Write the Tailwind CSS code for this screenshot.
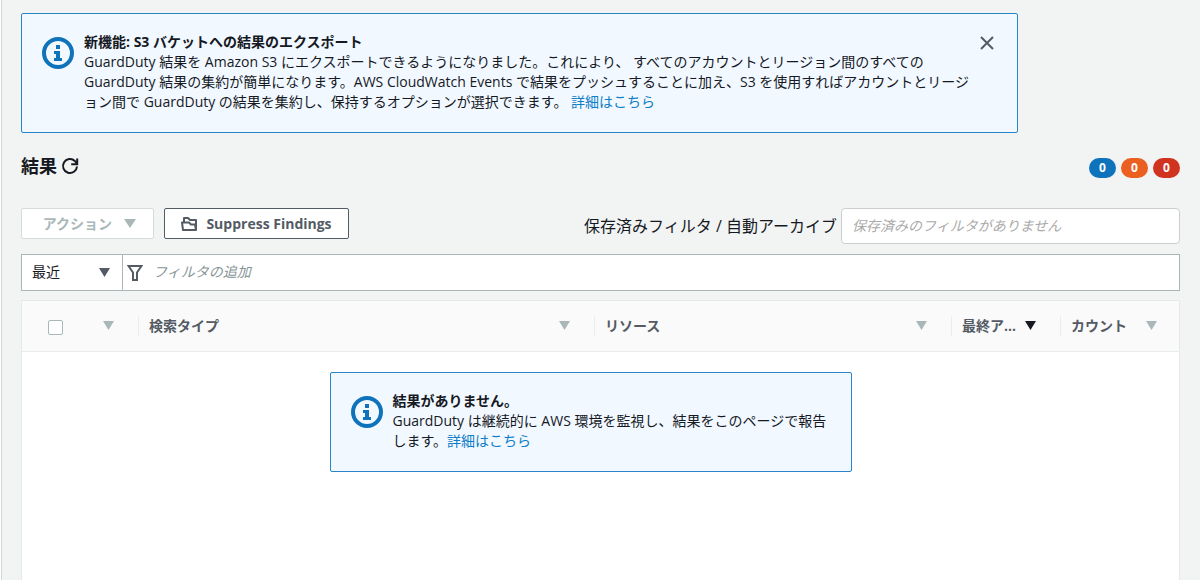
<!DOCTYPE html>
<html lang="ja">
<head>
    <meta charset="UTF-8" />
    <meta name="viewport" content="width=device-width, initial-scale=1.0" />
    <title>結果 | GuardDuty</title>
    <script src="https://cdn.jsdelivr.net/npm/@tailwindcss/browser@4"></script>
    <style>
        body {
            font-family: 'Open Sans', 'Noto Sans CJK JP', sans-serif;
        }
    </style>
</head>
<body class="bg-white pl-px text-sm text-[#16191f]">
    <main class="flex min-h-screen flex-col border-l border-[#d0d6d6] bg-[#f2f3f3] pt-[13px] pr-5 pl-[19px]">
        <!-- Aviso de nueva función -->
        <section class="flex h-[120px] w-[86%] items-start rounded-xs border border-[#2a85c7] bg-[#f1f8ff] pt-[18px] pr-[23px] pl-5 leading-5">
            <svg class="mt-[5px] h-8 w-8 shrink-0" viewBox="0 0 32 32" fill="none">
                <circle cx="16" cy="16" r="14" stroke="#0f73bb" stroke-width="4" />
                <path fill="#0f73bb" d="M14 8h4v4h-4zM12 14h6v7h2v3h-8v-3h2v-4h-2z" />
            </svg>
            <div class="ml-[10px] flex-1">
                <h2 class="font-bold">新機能: S3 バケットへの結果のエクスポート</h2>
                <p>GuardDuty 結果を Amazon S3 にエクスポートできるようになりました。これにより、 すべてのアカウントとリージョン間のすべての<br>GuardDuty 結果の集約が簡単になります。AWS CloudWatch Events で結果をプッシュすることに加え、S3 を使用すればアカウントとリージ<br>ョン間で GuardDuty の結果を集約し、保持するオプションが選択できます。 <a href="#" class="text-[#0f7dc7]">詳細はこちら</a></p>
            </div>
            <button type="button" aria-label="閉じる" class="mt-1 shrink-0">
                <svg class="h-[14px] w-[14px]" viewBox="0 0 14 14" fill="none" stroke="#545b64" stroke-width="2">
                    <path d="M1 1l12 12M13 1L1 13" />
                </svg>
            </button>
        </section>

        <header class="mt-[19px] flex h-7 items-center justify-between">
            <div class="flex items-center gap-1">
                <h1 class="text-lg leading-7 font-bold">結果</h1>
                <button type="button" aria-label="更新">
                    <svg class="h-[18px] w-[18px]" viewBox="0 0 18 18" fill="none" stroke="#16191f" stroke-width="2">
                        <path d="M16 9.500a7 7 0 1 1-2.200-5.600L16 6.500" />
                        <path d="M16.200 1.500v5.700h-6" />
                    </svg>
                </button>
            </div>
            <div class="mt-1 flex gap-[5px] text-xs font-bold text-white">
                <span class="flex h-5 w-[27px] items-center justify-center rounded-full bg-[#0f73bb]">0</span>
                <span class="flex h-5 w-[27px] items-center justify-center rounded-full bg-[#eb5f20]">0</span>
                <span class="flex h-5 w-[27px] items-center justify-center rounded-full bg-[#d13321]">0</span>
            </div>
        </header>

        <div class="mt-7 flex items-start justify-between">
            <div class="flex gap-[10px]">
                <button type="button" disabled class="flex h-[31px] w-[133px] items-center justify-end gap-3 rounded-xs border border-[#d5dbdb] bg-white pr-[17px] font-bold text-[#aab7b8]">
                    アクション
                    <svg class="h-[9px] w-3" viewBox="0 0 12 9" fill="currentColor"><path d="M0 0h12L6 9z" /></svg>
                </button>
                <button type="button" class="flex h-[31px] w-[185px] items-center justify-center gap-2 rounded-xs border border-[#545b64] bg-white font-bold text-[#545b64]">
                    <svg class="h-4 w-[17px] shrink-0" viewBox="0 0 17 16" fill="none" stroke="currentColor" stroke-width="2" stroke-linejoin="round">
                        <path d="M3 6V2h4l2 2h6v10" />
                        <path d="M1 6.500h7l2 2h4l1 5.500H2z" />
                    </svg>
                    Suppress Findings
                </button>
            </div>
            <div class="flex items-center gap-1">
                <label for="savedFilter" class="text-base">保存済みフィルタ / 自動アーカイブ</label>
                <input type="text" id="savedFilter" placeholder="保存済みのフィルタがありません" class="h-9 w-[339px] rounded-sm border border-[#cccfcf] bg-white px-[10px] pb-[2px] placeholder:text-[#aaaaaa] placeholder:italic" />
            </div>
        </div>

        <!-- Barra de filtros -->
        <div class="mt-[10px] flex h-[37px] border border-[#aab7b8] bg-white">
            <div class="relative w-[101px] shrink-0 border-r border-[#aab7b8]">
                <select aria-label="期間" class="h-full w-full appearance-none pb-[2px] pl-[10px]">
                    <option>最近</option>
                </select>
                <svg class="pointer-events-none absolute top-[13px] right-3 h-[9px] w-[11px]" viewBox="0 0 11 9" fill="#545b64"><path d="M0 0h11L5.500 9z" /></svg>
            </div>
            <label for="filterInput" aria-label="フィルタ" class="flex shrink-0 items-center pl-1">
                <svg class="h-4 w-4" viewBox="0 0 16 16" fill="none" stroke="#545b64" stroke-width="2">
                    <path d="M1.500 1h13L10 7.500V15H6V7.500z" />
                </svg>
            </label>
            <input type="text" id="filterInput" placeholder="フィルタの追加" class="min-w-0 flex-1 px-[10px] pb-[2px] placeholder:text-[#879596] placeholder:italic" />
        </div>

        <div class="mt-[9px] flex-1 border border-b-0 border-[#e6e9e9] bg-white">
            <table class="w-full table-fixed border-collapse text-left text-[#545b64]">
                <thead class="border-b border-[#eaeded] bg-[#fafafa]">
                    <tr class="h-[50px]">
                        <th class="w-[67px]">
                            <input type="checkbox" aria-label="すべて選択" class="mt-1 ml-[26px] block h-[15px] w-[15px] appearance-none rounded-xs border border-[#aab7b8] bg-white" />
                        </th>
                        <th class="w-[50px]">
                            <button type="button" aria-label="重要度" class="flex h-5 w-full items-center justify-end border-r border-[#eaeded] pr-6">
                                <svg class="h-[9px] w-[11px]" viewBox="0 0 11 9" fill="#aab7b8"><path d="M0 0h11L5.500 9z" /></svg>
                            </button>
                        </th>
                        <th>
                            <button type="button" class="flex h-5 w-full items-center justify-between border-r border-[#eaeded] pr-6 pl-[10px]">
                                検索タイプ
                                <svg class="h-[9px] w-[11px]" viewBox="0 0 11 9" fill="#aab7b8"><path d="M0 0h11L5.500 9z" /></svg>
                            </button>
                        </th>
                        <th class="w-[357px]">
                            <button type="button" class="flex h-5 w-full items-center justify-between border-r border-[#eaeded] pr-6 pl-[10px]">
                                リソース
                                <svg class="h-[9px] w-[11px]" viewBox="0 0 11 9" fill="#aab7b8"><path d="M0 0h11L5.500 9z" /></svg>
                            </button>
                        </th>
                        <th class="w-[109px]">
                            <button type="button" class="flex h-5 w-full items-center justify-between border-r border-[#eaeded] pr-6 pl-[10px]">
                                最終ア...
                                <svg class="h-[9px] w-[11px] shrink-0" viewBox="0 0 11 9" fill="#16191f"><path d="M0 0h11L5.500 9z" /></svg>
                            </button>
                        </th>
                        <th class="w-[118px]">
                            <button type="button" class="flex h-5 w-full items-center justify-between pr-[22px] pl-[10px]">
                                カウント
                                <svg class="h-[9px] w-[11px]" viewBox="0 0 11 9" fill="#aab7b8"><path d="M0 0h11L5.500 9z" /></svg>
                            </button>
                        </th>
                    </tr>
                </thead>
                <tbody>
                    <tr>
                        <td colspan="6" class="pt-5 pr-5 text-[#16191f]">
                            <!-- Sin resultados -->
                            <div class="mx-auto flex h-[100px] w-[522px] items-start rounded-xs border border-[#2a85c7] bg-[#f1f8ff] pt-[18px] pl-5 leading-5">
                                <svg class="mt-[5px] h-8 w-8 shrink-0" viewBox="0 0 32 32" fill="none">
                                    <circle cx="16" cy="16" r="14" stroke="#0f73bb" stroke-width="4" />
                                    <path fill="#0f73bb" d="M14 8h4v4h-4zM12 14h6v7h2v3h-8v-3h2v-4h-2z" />
                                </svg>
                                <div class="ml-[10px]">
                                    <h2 class="font-bold">結果がありません。</h2>
                                    <p>GuardDuty は継続的に AWS 環境を監視し、結果をこのページで報告<br>します。<a href="#" class="text-[#0f7dc7]">詳細はこちら</a></p>
                                </div>
                            </div>
                        </td>
                    </tr>
                </tbody>
            </table>
        </div>
    </main>
</body>
</html>
